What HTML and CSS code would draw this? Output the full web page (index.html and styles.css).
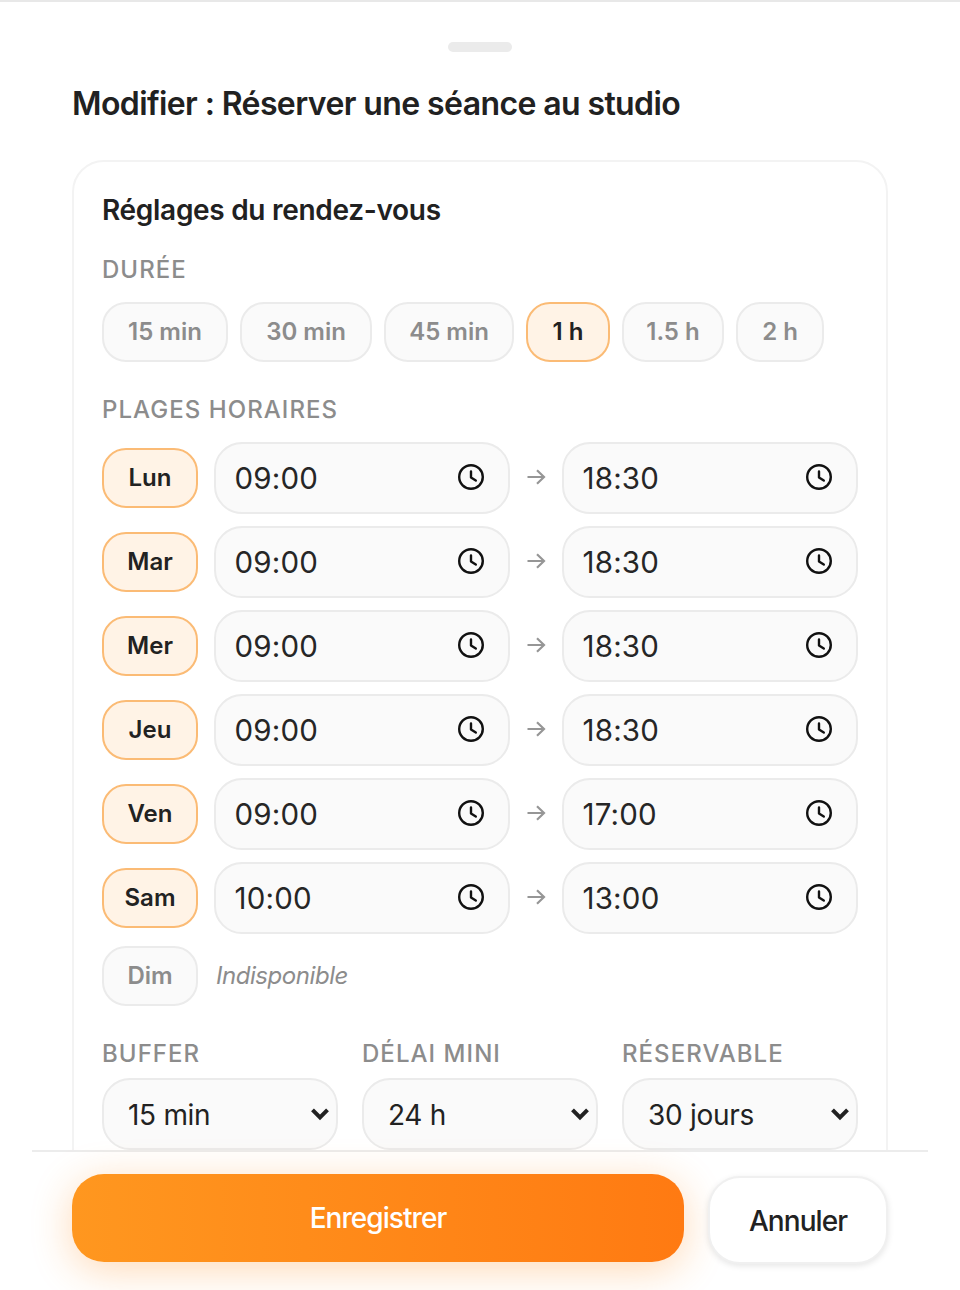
FILE: index.html
```html
<!DOCTYPE html>
<html lang="fr">
<head>
<meta charset="utf-8">
<title>Modifier</title>
<link rel="stylesheet" href="styles.css">
</head>
<body>
<svg class="defs" width="0" height="0" aria-hidden="true">
  <symbol id="clock" viewBox="0 0 26 26"><circle cx="13" cy="13" r="11.800" fill="none" stroke="#111" stroke-width="2.400"/><path d="M13 7.500V13.500l4.800 3" fill="none" stroke="#111" stroke-width="2.400" stroke-linecap="round" stroke-linejoin="round"/></symbol>
  <symbol id="arrow" viewBox="0 0 20 16"><path d="M1.500 8H18M11 1.200 18 8l-7 6.800" fill="none" stroke="#969696" stroke-width="2.200"/></symbol>
  <symbol id="chev" viewBox="0 0 20 14"><path d="M2.500 2.800 10 10.300 17.500 2.800" fill="none" stroke="#222" stroke-width="4"/></symbol>
</svg>
<div class="sheet">
  <div class="handle"></div>
  <h1 class="title">Modifier : Réserver une séance au studio</h1>
  <div class="scroll">
    <section class="card">
      <h2 class="card-title">Réglages du rendez-vous</h2>
      <div class="label label-first">DURÉE</div>
      <div class="chips">
        <span class="chip chip-15">15 min</span>
        <span class="chip chip-30">30 min</span>
        <span class="chip chip-45">45 min</span>
        <span class="chip chip-on chip-1h">1 h</span>
        <span class="chip chip-15h">1.5 h</span>
        <span class="chip chip-2h">2 h</span>
      </div>
      <div class="label label-slots">PLAGES HORAIRES</div>
      <div class="rows">
        <div class="row"><span class="chip day chip-on">Lun</span><div class="time"><span>09:00</span><svg class="ico"><use href="#clock"/></svg></div><svg class="arr"><use href="#arrow"/></svg><div class="time"><span>18:30</span><svg class="ico"><use href="#clock"/></svg></div></div>
        <div class="row"><span class="chip day chip-on">Mar</span><div class="time"><span>09:00</span><svg class="ico"><use href="#clock"/></svg></div><svg class="arr"><use href="#arrow"/></svg><div class="time"><span>18:30</span><svg class="ico"><use href="#clock"/></svg></div></div>
        <div class="row"><span class="chip day chip-on">Mer</span><div class="time"><span>09:00</span><svg class="ico"><use href="#clock"/></svg></div><svg class="arr"><use href="#arrow"/></svg><div class="time"><span>18:30</span><svg class="ico"><use href="#clock"/></svg></div></div>
        <div class="row"><span class="chip day chip-on">Jeu</span><div class="time"><span>09:00</span><svg class="ico"><use href="#clock"/></svg></div><svg class="arr"><use href="#arrow"/></svg><div class="time"><span>18:30</span><svg class="ico"><use href="#clock"/></svg></div></div>
        <div class="row"><span class="chip day chip-on">Ven</span><div class="time"><span>09:00</span><svg class="ico"><use href="#clock"/></svg></div><svg class="arr"><use href="#arrow"/></svg><div class="time"><span>17:00</span><svg class="ico"><use href="#clock"/></svg></div></div>
        <div class="row"><span class="chip day chip-on">Sam</span><div class="time"><span>10:00</span><svg class="ico"><use href="#clock"/></svg></div><svg class="arr"><use href="#arrow"/></svg><div class="time"><span>13:00</span><svg class="ico"><use href="#clock"/></svg></div></div>
        <div class="row row-off"><span class="chip day">Dim</span><em class="off">Indisponible</em></div>
      </div>
      <div class="selects">
        <div class="field"><div class="label">BUFFER</div><div class="select"><span>15 min</span><svg class="chev"><use href="#chev"/></svg></div></div>
        <div class="field"><div class="label">DÉLAI MINI</div><div class="select"><span>24 h</span><svg class="chev"><use href="#chev"/></svg></div></div>
        <div class="field"><div class="label">RÉSERVABLE</div><div class="select"><span>30 jours</span><svg class="chev"><use href="#chev"/></svg></div></div>
      </div>
    </section>
  </div>
  <footer class="footer">
    <button class="btn-save">Enregistrer</button>
    <button class="btn-cancel">Annuler</button>
  </footer>
</div>
</body>
</html>
```
FILE: styles.css
```css
* { box-sizing: border-box; }
html, body { margin: 0; padding: 0; background: #fff; }
body { font-family: Inter, "Liberation Sans", sans-serif; color: #1f1f1f; width: 960px; height: 1290px; overflow: hidden; }
.defs { position: absolute; }
.sheet { height: 1290px; border-top: 2px solid #e8e8e8; display: flex; flex-direction: column; align-items: stretch; padding: 0 32px; }
.handle { width: 64px; height: 10px; border-radius: 5px; background: #ebebeb; margin: 40px auto 0; flex: none; }
.title { margin: 31px 40px 0; font-size: 32px; line-height: 42px; font-weight: 600; letter-spacing: -0.6px; color: #212121; flex: none; white-space: nowrap; }
.scroll { margin-top: 35px; height: 990px; flex: none; overflow: hidden; padding: 0 40px; }
.card { border: 2px solid #f3f3f3; border-radius: 32px; padding: 28px 28px 40px; }
.card-title { margin: 0; font-size: 28px; line-height: 40px; font-weight: 600; letter-spacing: -0.3px; color: #212121; }
.label { font-size: 24px; line-height: 30px; font-weight: 500; letter-spacing: 1.05px; color: #8c8c8c; }
.label-first { margin-top: 25px; }
.chips { display: flex; gap: 12px; margin-top: 17px; }
.chip { display: flex; align-items: center; justify-content: center; height: 60px; padding-bottom: 2px; border: 2px solid #ebebeb; border-radius: 24px; background: #fafafa; color: #8c8c8c; font-size: 24px; font-weight: 600; flex: none; }
.chip-on { border-color: #fbbb75; background: #fff3e6; color: #222; }
.chip-15 { width: 126px; }
.chip-30 { width: 132px; }
.chip-45 { width: 130px; }
.chip-1h { width: 84px; }
.chip-15h { width: 102px; }
.chip-2h { width: 88px; }
.label-slots { margin-top: 33px; }
.rows { display: flex; flex-direction: column; gap: 12px; margin-top: 17px; }
.row { display: flex; align-items: center; gap: 16px; height: 72px; }
.row-off { height: 60px; }
.day { width: 96px; }
.time { width: 296px; height: 72px; border: 2px solid #ebebeb; border-radius: 28px; background: #fafafa; display: flex; align-items: center; justify-content: space-between; padding: 0 24px 0 18.500px; font-size: 29.500px; letter-spacing: 0.2px; font-weight: 400; color: #262626; flex: none; }
.ico { width: 26px; height: 26px; flex: none; margin-bottom: 2px; }
.arr { width: 20px; height: 16px; flex: none; margin-bottom: 2px; }
.off { font-size: 24px; letter-spacing: -0.450px; color: #8c8c8c; font-style: italic; margin: 0 0 2px 2px; }
.selects { display: flex; gap: 24px; margin-top: 33px; }
.field { width: 236px; flex: none; }
.select { margin-top: 9px; height: 72px; border: 2px solid #ebebeb; border-radius: 28px; background: #fafafa; display: flex; align-items: center; justify-content: space-between; padding: 0 6px 0 24px; font-size: 28px; letter-spacing: -0.3px; color: #222; }
.select span { padding-top: 2px; }
.chev { width: 20px; height: 14px; flex: none; }
.footer { flex: none; border-top: 2px solid #ececec; padding: 22px 40px 0; display: flex; align-items: flex-start; gap: 24px; }
.btn-save { width: 612px; height: 88px; border: 0; border-radius: 32px; background: linear-gradient(90deg, #ff971f, #ff7a12); color: #fff; font: 500 28px Inter, "Liberation Sans", sans-serif; letter-spacing: -0.950px; box-shadow: 0 8px 40px rgba(255, 140, 30, 0.32); }
.btn-cancel { width: 180px; height: 88px; margin-top: 2px; padding-top: 2px; border: 2px solid #f0f0f0; border-radius: 32px; background: #fff; color: #222; font: 500 28px Inter, "Liberation Sans", sans-serif; letter-spacing: -0.950px; box-shadow: 0 2px 6px rgba(0, 0, 0, 0.1); }
```
